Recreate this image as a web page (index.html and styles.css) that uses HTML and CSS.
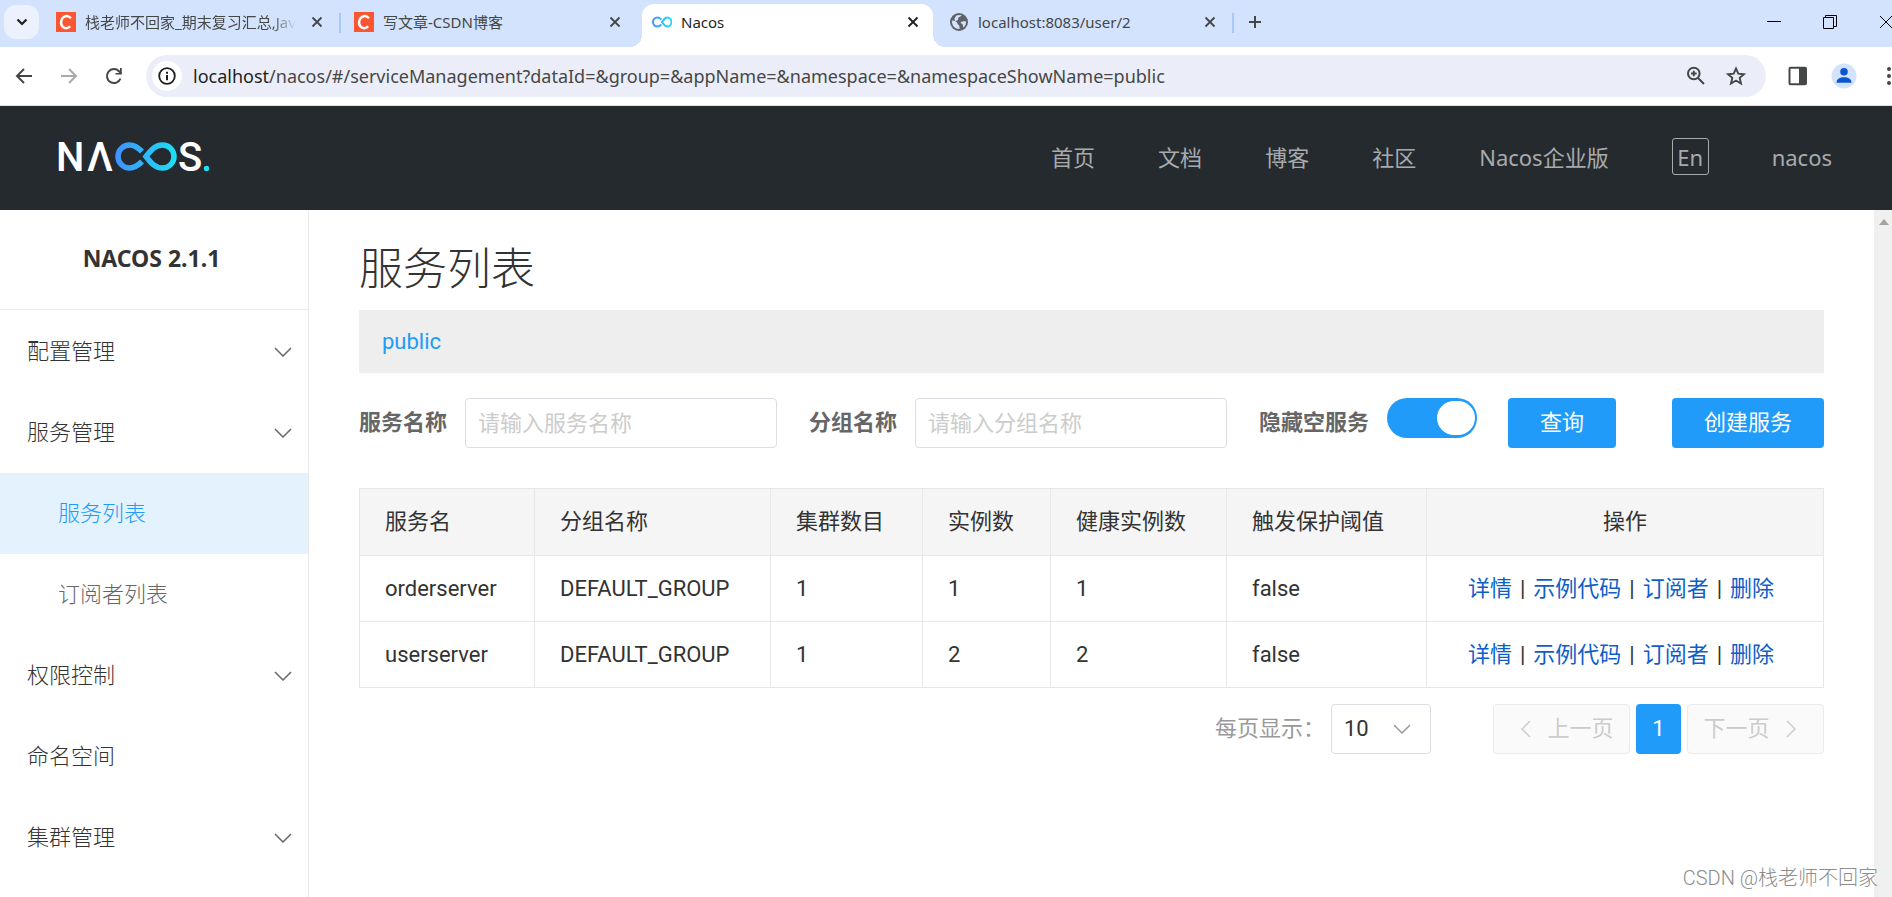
FILE: index.html
```html
<!DOCTYPE html>
<html lang="zh-CN">
<head>
<meta charset="utf-8">
<title>Nacos</title>
<link rel="stylesheet" href="styles.css">
</head>
<body>
<svg class="defs" width="0" height="0" aria-hidden="true">
  <defs>
    <linearGradient id="brand" gradientUnits="userSpaceOnUse" x1="56" y1="0" x2="118" y2="0">
      <stop offset="0" stop-color="#4190ff"/><stop offset="1" stop-color="#1be1f6"/>
    </linearGradient>
    <linearGradient id="brand-small" gradientUnits="userSpaceOnUse" x1="0" y1="0" x2="20" y2="0">
      <stop offset="0" stop-color="#4190ff"/><stop offset="1" stop-color="#1be1f6"/>
    </linearGradient>
    <symbol id="close" viewBox="0 0 12 12"><path d="M1.500 1.500l9 9M10.500 1.500l-9 9" fill="none" stroke="currentColor" stroke-width="1.800"/></symbol>
    <symbol id="down" viewBox="0 0 18 10"><path d="M1 1l8 8 8-8" fill="none" stroke="currentColor" stroke-width="1.500"/></symbol>
    <symbol id="csdn" viewBox="0 0 20 20"><rect width="20" height="20" fill="#fc5531"/><path d="M15 6.200C13 4 10.500 3.700 8.600 4.600 4.500 6.500 4 12.500 7 15c2 1.500 5 1.300 7.300-.6" fill="none" stroke="#fff" stroke-width="2.400"/></symbol>
  </defs>
</svg>

<div class="tabs">
  <button class="tab-search" aria-label="搜索标签页"><svg width="12" height="8" viewBox="0 0 12 8"><path d="M1.500 1.500L6 6l4.500-4.500" fill="none" stroke="#1f1f1f" stroke-width="2.200"/></svg></button>
  <div class="tab divided">
    <svg class="fav" viewBox="0 0 20 20"><use href="#csdn"/></svg>
    <span class="tab-title faded">栈老师不回家_期末复习汇总,Jav</span>
    <button class="tab-close" aria-label="关闭"><svg width="12" height="12"><use href="#close"/></svg></button>
  </div>
  <div class="tab">
    <svg class="fav" viewBox="0 0 20 20"><use href="#csdn"/></svg>
    <span class="tab-title">写文章-CSDN博客</span>
    <button class="tab-close" aria-label="关闭"><svg width="12" height="12"><use href="#close"/></svg></button>
  </div>
  <div class="tab active">
    <svg class="fav" viewBox="0 0 20 20"><path d="M9.500 7.500C8 6.100 7 5.500 5.500 5.500a4.500 4.500 0 0 0 0 9c1.500 0 2.500-.6 4-2M10 10c2-2.600 3-4.500 5-4.500a4.500 4.500 0 0 1 0 9c-2 0-3-1.900-5-4.500z" fill="none" stroke="url(#brand-small)" stroke-width="2"/></svg>
    <span class="tab-title">Nacos</span>
    <button class="tab-close" aria-label="关闭"><svg width="12" height="12"><use href="#close"/></svg></button>
  </div>
  <div class="tab divided">
    <svg class="fav" viewBox="0 0 20 20"><circle cx="10" cy="10" r="9" fill="#5f6368"/><path d="M3 8.500c3 0 5 1 5.500 3s2 1.200 2 3.200V17C6 17.500 2.500 13.500 3 8.500zM8 3.200l4.500-.2c-.5 1.500-2 2-3 2.500s.5 2-1 2.700-1.800 1-2.700.4C5 7 6 4.500 8 3.200zM12 10c1.500-1 3-1 5-.5.200 2.500-.8 4.500-2.500 6-.8-1-.2-2.500-1-3.200S11 11 12 10z" fill="#d3e3fd"/></svg>
    <span class="tab-title">localhost:8083/user/2</span>
    <button class="tab-close" aria-label="关闭"><svg width="12" height="12"><use href="#close"/></svg></button>
  </div>
  <button class="tab-new" aria-label="新标签页"><svg width="14" height="14" viewBox="0 0 14 14"><path d="M7 1v12M1 7h12" stroke="#444746" stroke-width="2"/></svg></button>
  <div class="window-buttons">
    <button aria-label="最小化"><svg width="14" height="14" viewBox="0 0 14 14"><path d="M0 6.500h14" stroke="#000"/></svg></button>
    <button aria-label="还原"><svg width="14" height="14" viewBox="0 0 14 14"><path d="M.5 2.500h10v11H.5zM2.500 2.500v-2h11v11h-3" fill="none" stroke="#000"/></svg></button>
    <button aria-label="关闭窗口"><svg width="14" height="14" viewBox="0 0 14 14"><path d="M1 1l12 12M13 1L1 13" stroke="#000"/></svg></button>
  </div>
</div>

<div class="toolbar">
  <button aria-label="后退"><svg width="18" height="18" viewBox="0 0 18 18"><path d="M17 9H2.500M9 2L2 9l7 7" fill="none" stroke="#444746" stroke-width="2"/></svg></button>
  <button aria-label="前进"><svg width="18" height="18" viewBox="0 0 18 18"><path d="M1 9h14.500M9 2l7 7-7 7" fill="none" stroke="#a9abab" stroke-width="2"/></svg></button>
  <button aria-label="刷新"><svg width="18" height="18" viewBox="0 0 18 18"><path d="M15.500 11.500A7 7 0 1 1 14 4.200L16 6.500" fill="none" stroke="#444746" stroke-width="2"/><path d="M16.800 1v6.500h-6.300V6h4.500V1z" fill="#444746"/></svg></button>
  <div class="omnibox">
    <span class="info"><svg width="18" height="18" viewBox="0 0 18 18"><circle cx="9" cy="9" r="7.800" fill="none" stroke="#1f1f1f" stroke-width="1.800"/><path d="M9 8v5.200M9 4.800v2" stroke="#1f1f1f" stroke-width="2"/></svg></span>
    <div class="url"><b>localhost</b>/nacos/#/serviceManagement?dataId=&amp;group=&amp;appName=&amp;namespace=&amp;namespaceShowName=public</div>
    <button aria-label="缩放"><svg width="20" height="20" viewBox="0 0 20 20"><circle cx="7.800" cy="7.500" r="5.800" fill="none" stroke="#444746" stroke-width="2"/><path d="M12 12l6 6M5 7.500h5.600M7.800 4.700v5.600" stroke="#444746" stroke-width="1.900"/></svg></button>
    <button aria-label="收藏"><svg width="20" height="20" viewBox="0 0 20 20"><path d="M10 2.500l2.300 5.200 5.700.5-4.300 3.700 1.300 5.600-5-3-5 3 1.300-5.600L2 8.200l5.700-.5z" fill="none" stroke="#444746" stroke-width="1.900"/></svg></button>
  </div>
  <button class="panel" aria-label="侧边栏"><svg width="20" height="20" viewBox="0 0 20 20"><rect x="1.500" y="1.800" width="16.500" height="16.400" rx="1" fill="none" stroke="#444746" stroke-width="2"/><path d="M11 2h7v16h-7z" fill="#444746"/></svg></button>
  <button class="avatar" aria-label="用户"><svg width="26" height="26" viewBox="0 0 26 26"><circle cx="13" cy="13" r="12.500" fill="#d3e3fd"/><circle cx="13" cy="8.800" r="3.800" fill="#0b57d0"/><path d="M5.500 19.800c0-4 3.500-5.500 7.500-5.500s7.500 1.500 7.500 5.500z" fill="#0b57d0"/></svg></button>
  <button class="more" aria-label="更多"><svg width="6" height="20" viewBox="0 0 6 20"><circle cx="3" cy="3" r="2" fill="#444746"/><circle cx="3" cy="10" r="2" fill="#444746"/><circle cx="3" cy="17" r="2" fill="#444746"/></svg></button>
</div>

<header class="header">
  <a class="logo" href="#" aria-label="Nacos">
    <svg width="152" height="30" viewBox="0 0 152 30">
      <g class="logo-text"><text x="-3" y="29">N</text><text x="28" y="29">Λ</text><text x="119" y="29">S</text></g>
      <path d="M83 9.500C79 5.500 75.500 3 70.500 3a11.500 11.500 0 0 0 0 23c5 0 8.500-2.500 12.500-6.500M87 14.500C92 8 96 3 103.500 3a11.500 11.500 0 0 1 0 23C96 26 92 21 87 14.500z" fill="none" stroke="url(#brand)" stroke-width="5.500"/>
      <circle cx="147.500" cy="26.500" r="2.700" fill="#1be1f6"/>
    </svg>
  </a>
  <nav class="nav">
    <a href="#">首页</a><a href="#">文档</a><a href="#">博客</a><a href="#">社区</a><a href="#">Nacos企业版</a>
    <button class="lang">En</button>
    <a href="#">nacos</a>
  </nav>
</header>

<div class="layout">
  <aside class="side">
    <h1 class="version">NACOS 2.1.1</h1>
    <ul class="menu">
      <li><a href="#">配置管理<svg width="18" height="10"><use href="#down"/></svg></a></li>
      <li><a href="#">服务管理<svg width="18" height="10"><use href="#down"/></svg></a>
        <ul class="submenu">
          <li><a class="current" href="#">服务列表</a></li>
          <li><a href="#">订阅者列表</a></li>
        </ul>
      </li>
      <li><a href="#">权限控制<svg width="18" height="10"><use href="#down"/></svg></a></li>
      <li><a href="#">命名空间</a></li>
      <li><a href="#">集群管理<svg width="18" height="10"><use href="#down"/></svg></a></li>
    </ul>
  </aside>

  <main class="main">
    <h2 class="title">服务列表</h2>
    <div class="namespaces"><a href="#">public</a></div>

    <form class="filters">
      <label for="service">服务名称</label>
      <input class="field" id="service" type="text" placeholder="请输入服务名称">
      <label for="group">分组名称</label>
      <input class="field" id="group" type="text" placeholder="请输入分组名称">
      <label for="hide">隐藏空服务</label>
      <input class="switch" id="hide" type="checkbox" role="switch" checked>
      <button class="primary query" type="button">查询</button>
      <button class="primary create" type="button">创建服务</button>
    </form>

    <table class="services">
      <colgroup><col class="c-name"><col class="c-group"><col class="c-clusters"><col class="c-count"><col class="c-healthy"><col class="c-threshold"><col></colgroup>
      <thead><tr><th>服务名</th><th>分组名称</th><th>集群数目</th><th>实例数</th><th>健康实例数</th><th>触发保护阈值</th><th class="ops-head">操作</th></tr></thead>
      <tbody>
        <tr><td>orderserver</td><td>DEFAULT_GROUP</td><td>1</td><td>1</td><td>1</td><td>false</td><td class="ops"><a href="#">详情</a><i>|</i><a href="#">示例代码</a><i>|</i><a href="#">订阅者</a><i>|</i><a href="#">删除</a></td></tr>
        <tr><td>userserver</td><td>DEFAULT_GROUP</td><td>1</td><td>2</td><td>2</td><td>false</td><td class="ops"><a href="#">详情</a><i>|</i><a href="#">示例代码</a><i>|</i><a href="#">订阅者</a><i>|</i><a href="#">删除</a></td></tr>
      </tbody>
    </table>

    <div class="pager">
      <label for="size">每页显示：</label>
      <span class="select"><select id="size"><option>10</option><option>20</option><option>30</option></select><svg width="18" height="10"><use href="#down"/></svg></span>
      <button class="step prev" disabled><svg width="10" height="18" viewBox="0 0 10 18"><path d="M9 1L1 9l8 8" fill="none" stroke="currentColor" stroke-width="1.500"/></svg>上一页</button>
      <button class="page">1</button>
      <button class="step next" disabled>下一页<svg width="10" height="18" viewBox="0 0 10 18"><path d="M1 1l8 8-8 8" fill="none" stroke="currentColor" stroke-width="1.500"/></svg></button>
    </div>
  </main>

  <div class="scroll"><svg width="10" height="6" viewBox="0 0 10 6"><path d="M0 6l5-6 5 6z" fill="#a3a3a3"/></svg></div>
</div>
<div class="watermark">CSDN @栈老师不回家</div>
</body>
</html>
```
FILE: styles.css
```css
* { box-sizing: border-box; }

body {
  margin: 0;
  height: 100vh;
  display: flex;
  flex-direction: column;
  overflow: hidden;
  background: #fff;
  color: #333;
  font: 22px/32px Roboto, "Noto Sans CJK SC", sans-serif;
}

.defs { position: absolute; }
svg { display: block; flex: none; }
a { color: inherit; text-decoration: none; }
button { font: inherit; color: inherit; border: 0; padding: 0; background: none; }
ul { list-style: none; margin: 0; padding: 0; }

/* browser tabs */
.tabs {
  flex: none;
  display: flex;
  height: 47px;
  padding-left: 4px;
  background: #d3e3fd;
  color: #444746;
  font: 15px/20px "Noto Sans", "Noto Sans CJK SC", sans-serif;
}
.tab-search {
  display: grid;
  place-items: center;
  width: 35px;
  height: 34px;
  margin: 5px 4px 0 0;
  border-radius: 12px;
  background: #ebf2fe;
}
.tab {
  flex: 0 1 298px;
  min-width: 0;
  display: flex;
  align-items: center;
  gap: 9px;
  padding: 0 18px 3px 13px;
}
.divided {
  background: linear-gradient(#a8c7fa, #a8c7fa) right 13px / 2px 20px no-repeat;
}
.active {
  position: relative;
  flex-basis: 291px;
  margin: 4px 3px 0;
  padding: 0 14px 7px 10px;
  border-radius: 12px 12px 0 0;
  background: #fff;
  color: #1f1f1f;
}
.active::before, .active::after {
  content: "";
  position: absolute;
  bottom: 0;
  width: 12px;
  height: 12px;
}
.active::before { right: 100%; background: radial-gradient(circle at 0 0, transparent 12px, #fff 12px); }
.active::after { left: 100%; background: radial-gradient(circle at 100% 0, transparent 12px, #fff 12px); }
.fav { width: 20px; height: 20px; }
.tab-title { flex: 1; min-width: 0; white-space: nowrap; }
.faded { mask-image: linear-gradient(90deg, #000 88%, transparent); }
.tab-close { width: 12px; height: 12px; margin-left: 6px; }
.tab-new { padding: 0 0 3px 14px; }
.window-buttons {
  flex: none;
  display: flex;
  align-items: center;
  gap: 42px;
  margin-left: auto;
  margin-right: -1px;
  padding-bottom: 4px;
}

/* address bar */
.toolbar {
  flex: none;
  display: flex;
  align-items: center;
  gap: 27px;
  height: 59px;
  padding-left: 15px;
  border-bottom: 1px solid #dde3e6;
}
.omnibox {
  flex: 1;
  min-width: 0;
  display: flex;
  align-items: center;
  gap: 20px;
  height: 42px;
  margin-left: -4px;
  padding: 0 20px 0 6px;
  border-radius: 21px;
  background: #ebeef8;
}
.info {
  display: grid;
  place-items: center;
  width: 30px;
  height: 30px;
  margin-right: -9px;
  border-radius: 50%;
  background: #fff;
}
.url {
  flex: 1;
  overflow: hidden;
  white-space: nowrap;
  color: #474747;
  font: 18px/24px "Noto Sans", "Noto Sans CJK SC", sans-serif;
}
.url b { font-weight: 400; color: #1f1f1f; }
.panel { margin-left: -5px; }
.avatar { margin-left: -4px; }
.more { margin-left: 2px; }

/* site header */
.header {
  flex: none;
  display: flex;
  align-items: center;
  justify-content: space-between;
  height: 104px;
  padding: 0 60px 3px 59px;
  background: #252a2f;
}
.logo svg { overflow: visible; }
.logo-text { font: 500 40px Roboto, sans-serif; fill: #fff; }
.nav {
  display: flex;
  align-items: center;
  gap: 63px;
  color: #a8aaac;
  font-family: "Noto Sans", "Noto Sans CJK SC", sans-serif;
}
.lang {
  width: 37px;
  height: 37px;
  border: 1px solid #a8aaac;
  border-radius: 3px;
}

.layout { flex: 1; min-height: 0; display: flex; }

/* sidebar */
.side { flex: none; width: 309px; border-right: 1px solid #eaeaea; }
.version {
  margin: 0;
  height: 100px;
  padding-right: 5px;
  border-bottom: 1px solid #eaeaea;
  font: 700 23px/96px "Noto Sans", sans-serif;
  text-align: center;
}
.menu { padding-top: 1px; font-weight: 300; }
.menu a {
  display: flex;
  align-items: center;
  justify-content: space-between;
  height: 81px;
  padding: 0 16px 0 27px;
}
.menu svg { color: #666; }
.menu .submenu a { padding-left: 58px; color: #666; }
.menu .submenu .current { background: #e4f2fe; color: #209bfa; }

/* content */
.main { flex: 1; min-width: 0; padding: 28px 50px 0; }
.title { margin: 0; font-size: 44px; font-weight: 300; line-height: 64px; }
.namespaces {
  height: 63px;
  margin-top: 8px;
  padding: 0 23px;
  background: #eee;
  color: #209bfa;
  line-height: 63px;
}
.filters {
  display: flex;
  align-items: center;
  gap: 18px;
  margin-top: 25px;
}
.filters label { flex: none; color: #666; font-weight: 700; }
.field {
  flex: 0 1 312px;
  min-width: 0;
  height: 50px;
  margin-right: 14px;
  padding: 0 12px;
  border: 1px solid #dcdee3;
  border-radius: 4px;
  font: inherit;
}
.field::placeholder { color: #ccc; }
.switch {
  appearance: none;
  flex: none;
  align-self: flex-start;
  display: flex;
  justify-content: flex-end;
  width: 90px;
  height: 40px;
  margin: 0 13px 0 0;
  padding: 3px 2px;
  border-radius: 20px;
  background: #209bfa;
}
.switch::before { content: ""; width: 38px; border-radius: 19px; background: #fff; }
.primary {
  flex: none;
  height: 50px;
  padding: 0 32px;
  border-radius: 4px;
  background: #209bfa;
  color: #fff;
}
.create { margin-left: auto; }

.services {
  width: 100%;
  margin-top: 40px;
  border-collapse: collapse;
  table-layout: fixed;
}
.services th, .services td {
  height: 66px;
  padding: 0 25px;
  border: 1px solid #e6e7eb;
  text-align: left;
  font-weight: 400;
  white-space: nowrap;
}
.services th { height: 67px; background: #f5f5f5; }
.c-name { width: 175px; }
.c-group { width: 236px; }
.c-clusters { width: 152px; }
.c-count { width: 128px; }
.c-healthy { width: 176px; }
.c-threshold { width: 200px; }
.services .ops-head { text-align: center; }
.services .ops { padding: 0 8px 0 0; text-align: center; }
.ops a { color: #0e5ec9; }
.ops i { margin: 0 8px; font-style: normal; }

.pager {
  display: flex;
  align-items: center;
  justify-content: flex-end;
  gap: 6px;
  margin-top: 16px;
}
.pager label { color: #999; }
.select {
  position: relative;
  margin-right: 56px;
}
.select select {
  appearance: none;
  display: block;
  width: 100px;
  height: 50px;
  padding: 0 12px;
  border: 1px solid #dcdee3;
  border-radius: 4px;
  background: #fff;
  color: #333;
  font: inherit;
}
.select svg {
  position: absolute;
  top: 20px;
  right: 20px;
  color: #999;
  pointer-events: none;
}
.step {
  display: flex;
  align-items: center;
  justify-content: center;
  gap: 16px;
  width: 137px;
  height: 50px;
  border: 1px solid #eaebee;
  border-radius: 4px;
  background: #fafafa;
  color: #ccc;
}
.prev { padding-left: 12px; }
.next { padding-right: 12px; }
.page {
  width: 45px;
  height: 50px;
  border-radius: 4px;
  background: #209bfa;
  color: #fff;
}

.scroll {
  flex: none;
  width: 18px;
  padding: 9px 3px 9px 5px;
  background: #f0f0f0;
}
.watermark {
  position: absolute;
  right: 14px;
  bottom: 4px;
  color: #8c8c8c;
  font-size: 20px;
  font-weight: 300;
  line-height: 30px;
  text-shadow: -1px -1px 0 #fff;
}
```
